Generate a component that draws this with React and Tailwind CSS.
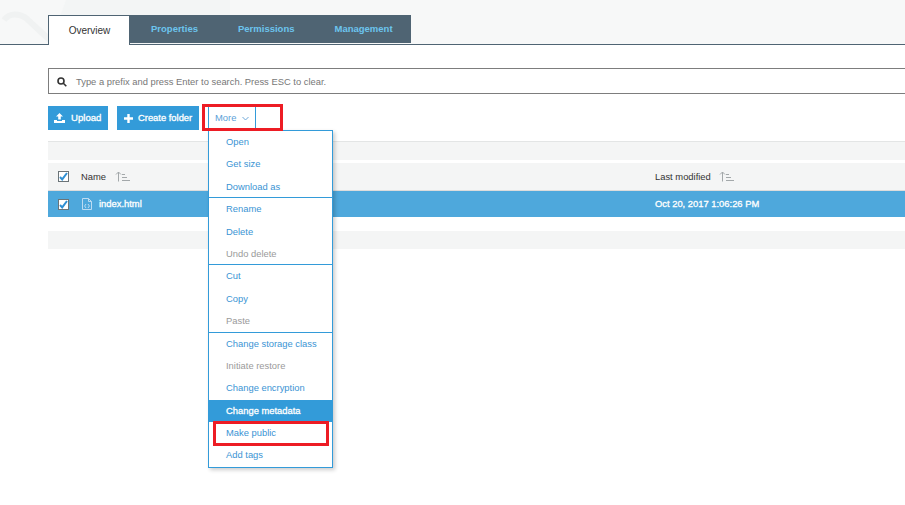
import React from "react";

const FONT = { fontFamily: '"Liberation Sans", Arial, sans-serif' };

const Sort = () => (
  <svg width="15" height="11" viewBox="0 0 15 11" fill="none" stroke="#a3a8aa" strokeWidth="1">
    <path d="M3.5 10.5V1M1 3.5 3.5 1 6 3.5" />
    <path d="M7 3.5h3M7 6.5h5M7 9.5h8" />
  </svg>
);

const Check = () => (
  <span className="flex h-[11px] w-[11px] items-center justify-center border border-[#6b7478] bg-white">
    <svg width="9" height="9" viewBox="0 0 9 9" fill="none" stroke="#2f8fd3" strokeWidth="2">
      <path d="M1 5l2.2 2.4L8 1" />
    </svg>
  </span>
);

const groups = [
  [["Open"], ["Get size"], ["Download as"]],
  [["Rename"], ["Delete"], ["Undo delete", "off"]],
  [["Cut"], ["Copy"], ["Paste", "off"]],
  [["Change storage class"], ["Initiate restore", "off"], ["Change encryption"], ["Change metadata", "on"], ["Make public"], ["Add tags"]],
];

function Item({ label, kind }) {
  const color =
    kind === "on"
      ? "bg-[#339bd9] text-white [-webkit-text-stroke:0.3px_#fff]"
      : kind === "off"
        ? "text-[#9a9a9a]"
        : "text-[#3a94d4]";
  return <div className={`flex h-[22.4px] items-center whitespace-nowrap pb-px pl-[17px] ${color}`}>{label}</div>;
}

export default function App() {
  return (
    <div className="relative h-[505px] w-[905px] overflow-hidden bg-white text-[9.4px] leading-none text-[#333]" style={FONT}>
      <header className="relative h-[45px] border-b border-[#4f6473] bg-[#f7f8f8] pl-12 pt-[15px]">
        <svg className="absolute left-0 top-0" width="230" height="44" fill="none">
          <path d="M66 0 50 44H230V0Z" fill="#f3f5f5" />
          <path d="M4 20C10 12 20 14 26 18L54 44" stroke="#f0f2f2" strokeWidth="6" />
        </svg>
        <nav className="relative flex items-start">
          <div className="z-10 flex h-[30px] w-[82px] items-center justify-center border border-b-0 border-[#4f6473] bg-white pl-px pt-px text-[10px] text-[#333]">
            Overview
          </div>
          <div className="flex h-[28px] w-[281px] items-center bg-[#4f6473] text-[9.5px] font-bold text-[#6cc4ee]">
            <span className="ml-[21px]">Properties</span>
            <span className="ml-[40px]">Permissions</span>
            <span className="ml-[40px]">Management</span>
          </div>
        </nav>
      </header>

      <main className="pl-12">
        <div className="mt-[23px] flex h-[26px] w-[900px] items-center border border-[#7d7d7d] pl-2 pt-px text-[#777]">
          <svg width="10" height="10" viewBox="0 0 10 10" fill="none" stroke="#333" strokeWidth="1.6">
            <circle cx="4" cy="4" r="3" />
            <path d="m6.3 6.3 3 3" />
          </svg>
          <span className="ml-[9px]">Type a prefix and press Enter to search. Press ESC to clear.</span>
        </div>

        <div className="mt-3 flex h-6 items-stretch">
          <button className="flex w-[60px] items-center whitespace-nowrap bg-[#339bd9] pl-[6px] text-[9.6px] text-white [-webkit-text-stroke:0.3px_#fff]">
            <svg width="11" height="10" viewBox="0 0 11 10" fill="#fff">
              <path d="M5.5 0 9 3.4H6.8V6.5H4.2V3.4H2Z" />
              <path d="M0 7h3v1h5V7h3v3H0Z" />
            </svg>
            <span className="ml-[6px]">Upload</span>
          </button>
          <button className="ml-[9px] flex w-[82px] items-center whitespace-nowrap bg-[#339bd9] pl-[7px] text-white [-webkit-text-stroke:0.3px_#fff]">
            <svg width="9" height="9" viewBox="0 0 9 9" fill="#fff">
              <path d="M3.3 0h2.4v3.3H9v2.4H5.7V9H3.3V5.7H0V3.3h3.3Z" />
            </svg>
            <span className="ml-[5px]">Create folder</span>
          </button>
          <button className="ml-[9px] flex w-[48px] items-center border-x border-[#339bd9] pl-[6px] text-[#5b9fd8]">
            More
            <svg className="ml-[6px]" width="7" height="5" viewBox="0 0 7 5" fill="none" stroke="#6fa8d8">
              <path d="m.5 1 3 3 3-3" />
            </svg>
          </button>
        </div>

        <div className="mt-[11px] h-[19px] w-[857px] border-t border-[#e3e5e5] bg-[#f4f5f5]" />

        <div className="mt-[3px] flex h-[28px] w-[857px] items-center border-b border-[#dcdcdc] bg-[#f4f5f5]">
          <div className="flex w-[607px] items-center">
            <span className="ml-[10px]"><Check /></span>
            <span className="ml-3 text-[#333]">Name</span>
            <span className="ml-[9px]"><Sort /></span>
          </div>
          <span className="text-[#333]">Last modified</span>
          <span className="ml-[8px]"><Sort /></span>
        </div>

        <div className="flex h-[26px] w-[857px] items-center bg-[#4ea8dc] text-white [-webkit-text-stroke:0.3px_#fff]">
          <div className="flex w-[607px] items-center">
            <span className="ml-[10px]"><Check /></span>
            <svg className="ml-[13px]" width="10" height="12" viewBox="0 0 10 12" fill="none" stroke="#bcdcf2">
              <path d="M.5.5h6l3 3v8h-9Z" />
              <path d="M6.5.5v3h3M4 6 2.6 8 4 10M6 6l1.4 2L6 10" />
            </svg>
            <span className="ml-[7px]">index.html</span>
          </div>
          <span>Oct 20, 2017 1:06:26 PM</span>
        </div>

        <div className="mt-[14px] h-[18px] w-[857px] bg-[#f4f5f5]" />
      </main>

      <div className="absolute left-[208px] top-[130px] w-[125px] border border-[#339bd9] bg-white shadow-[2px_2px_4px_rgba(0,0,0,0.2)]">
        {groups.map((g, i) => (
          <div key={i} className={i ? "-mt-px border-t border-[#339bd9]" : ""}>
            {g.map(([label, kind]) => (
              <Item key={label} label={label} kind={kind} />
            ))}
          </div>
        ))}
      </div>

      <div className="absolute left-[202px] top-[104px] h-[27px] w-[81px] border-[3px] border-[#ed1c24]" />
      <div className="absolute left-[213px] top-[421px] h-[25px] w-[116px] border-[3px] border-[#ed1c24]" />
    </div>
  );
}
